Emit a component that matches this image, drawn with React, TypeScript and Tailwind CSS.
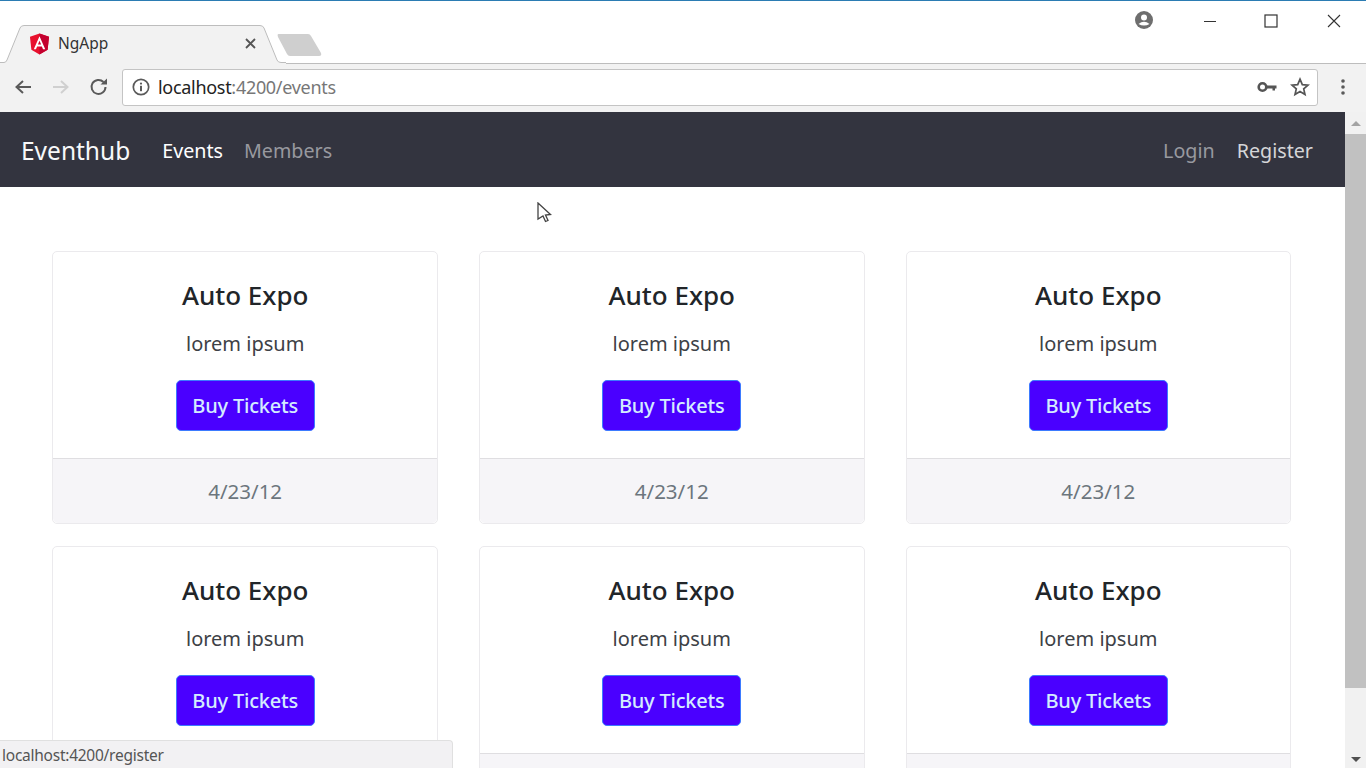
import React from 'react';

const uiFont = { fontFamily: '"Noto Sans", "Open Sans", sans-serif' };

const AngularLogo = () => (
  <svg width="21" height="22" viewBox="0 0 22 23">
    <path d="M11 0.5 L21 4 L19.5 17.5 L11 22.5 L2.5 17.5 L1 4 Z" fill="#e8112d" />
    <path d="M11 0.5 L21 4 L19.5 17.5 L11 22.5 Z" fill="#c3002f" />
    <path
      d="M11 3.5 L5 17 H7.3 L8.5 14 H13.5 L14.7 17 H17 Z M11 8 L12.7 12 H9.3 Z"
      fill="#fff"
      fillRule="evenodd"
    />
  </svg>
);

const TabShape = () => (
  <svg className="absolute left-0 top-0" width="286" height="39" viewBox="0 0 286 39">
    <path
      d="M0 37.5 H4 Q6 37.5 7 35 L20 3 Q21 0.5 24 0.5 H260 Q263 0.5 264 3 L277 35 Q278 37.5 281 37.5 H286 V39 H0 Z"
      fill="#f2f2f2"
    />
    <path
      d="M0 37.5 H4 Q6 37.5 7 35 L20 3 Q21 0.5 24 0.5 H260 Q263 0.5 264 3 L277 35 Q278 37.5 281 37.5 H286"
      fill="none"
      stroke="#bdbdbd"
      strokeWidth="1"
    />
  </svg>
);

const WindowControls = () => (
  <div className="flex items-center pr-[25px] text-[#333]">
    <svg width="20" height="20" viewBox="0 0 20 20" className="mr-[49px] mb-[2px]">
      <circle cx="10" cy="10" r="9" fill="#6e6e6e" />
      <circle cx="10" cy="7.5" r="3" fill="#fff" />
      <path d="M4.5 14 Q10 9.5 15.5 14 Q10 17 4.5 14 Z" fill="#fff" />
    </svg>
    <svg width="14" height="14" viewBox="0 0 14 14" className="mr-[47px]">
      <path d="M1 7.5 H13" stroke="#333" strokeWidth="1" />
    </svg>
    <svg width="14" height="14" viewBox="0 0 14 14" className="mr-[49px]">
      <rect x="1" y="1" width="12" height="12" fill="none" stroke="#333" strokeWidth="1.2" />
    </svg>
    <svg width="14" height="14" viewBox="0 0 14 14">
      <path d="M1 1 L13 13 M13 1 L1 13" stroke="#333" strokeWidth="1.1" />
    </svg>
  </div>
);

const TabStrip = () => (
  <div className="flex h-[62px] items-start justify-between bg-white">
    <div className="flex items-end pt-[24px]">
      <div className="relative h-[38px] w-[286px]">
        <TabShape />
        <div className="relative flex h-full items-center pb-[1px] pl-[29px] pr-[30px]">
          <AngularLogo />
          <span className="ml-[8px] flex-1 text-[15.5px] text-[#333]">NgApp</span>
          <svg width="11" height="11" viewBox="0 0 11 11">
            <path d="M1 1 L10 10 M10 1 L1 10" stroke="#555" strokeWidth="1.8" />
          </svg>
        </div>
      </div>
      <svg width="48" height="24" viewBox="0 0 48 24" className="mb-[6px] -ml-[9px]">
        <path d="M1.5 1 H31 Q33 1 34 3 L44 20 Q45 23 42 23 H13 Q11 23 10 21 L1 4 Q0 1 1.5 1 Z" fill="#cfcfcf" />
      </svg>
    </div>
    <div className="flex h-[38px] items-center pt-[1px]">
      <WindowControls />
    </div>
  </div>
);

const Toolbar = () => (
  <div className="flex h-[49px] items-center border-t border-[#bdbdbd] bg-[#f2f2f2] pb-[2px] pl-[14px] pr-[21px]">
    <svg width="18" height="18" viewBox="0 0 18 18" className="mr-[20px]">
      <path d="M17 9 H3 M9 3 L2.5 9 L9 15" fill="none" stroke="#5a5a5a" strokeWidth="2" />
    </svg>
    <svg width="18" height="18" viewBox="0 0 18 18" className="mr-[19px]">
      <path d="M1 9 H15 M9 3 L15.5 9 L9 15" fill="none" stroke="#d0d0d0" strokeWidth="2" />
    </svg>
    <svg width="20" height="20" viewBox="0 0 20 20" className="mr-[13px]">
      <path d="M16.5 10 A7 7 0 1 1 14.5 5" fill="none" stroke="#5a5a5a" strokeWidth="2" />
      <path d="M11.5 7.5 H18 V1.5 Z" fill="#5a5a5a" />
    </svg>
    <div className="flex h-[37px] flex-1 items-center rounded-[3px] border border-[#c4c4c4] bg-white pl-[9px] pr-[7px]">
      <svg width="18" height="18" viewBox="0 0 18 18" className="mr-[8px]">
        <circle cx="9" cy="9" r="7.7" fill="none" stroke="#5a5a5a" strokeWidth="1.7" />
        <circle cx="9" cy="5.6" r="1.1" fill="#5a5a5a" />
        <rect x="8" y="7.8" width="2" height="5.4" fill="#5a5a5a" />
      </svg>
      <span className="flex-1 text-[18px] tracking-[-0.3px]">
        <span className="text-[#222]">localhost</span>
        <span className="text-[#777]">:4200/events</span>
      </span>
      <svg width="20" height="12" viewBox="0 0 20 12" className="mr-[13px]">
        <circle cx="5.5" cy="6" r="3.8" fill="none" stroke="#555" strokeWidth="2.6" />
        <path d="M9 4.5 H19.5 V7.5 H18 V9.5 H15.5 V7.5 H9 Z" fill="#555" />
      </svg>
      <svg width="20" height="20" viewBox="0 0 20 20">
        <path
          d="M10 2.2 L12.3 7.6 L18 8.1 L13.7 11.9 L15 17.6 L10 14.6 L5 17.6 L6.3 11.9 L2 8.1 L7.7 7.6 Z"
          fill="none"
          stroke="#555"
          strokeWidth="1.7"
        />
      </svg>
    </div>
    <svg width="4" height="16" viewBox="0 0 4 16" className="ml-[23px]">
      <circle cx="2" cy="2" r="1.8" fill="#5a5a5a" />
      <circle cx="2" cy="8" r="1.8" fill="#5a5a5a" />
      <circle cx="2" cy="14" r="1.8" fill="#5a5a5a" />
    </svg>
  </div>
);

const Navbar = () => (
  <nav className="flex h-[75px] shrink-0 items-center justify-between bg-[#33343f] pl-[21px] pr-[32px] pt-[3px]">
    <div className="flex items-center">
      <a className="mr-[32px] text-[24.5px] text-[#f8f9fa]">Eventhub</a>
      <a className="mr-[21px] text-[19.7px] text-white">Events</a>
      <a className="text-[19.7px] text-[#98999f]">Members</a>
    </div>
    <div className="flex items-center">
      <a className="mr-[22px] text-[19.7px] text-[#98999f]">Login</a>
      <a className="text-[19.7px] text-[#d5d6d8]">Register</a>
    </div>
  </nav>
);

const EventCard = ({ date }: { date?: string }) => (
  <div className="flex h-[273px] flex-col rounded-[5px] border border-[#ebeaed] bg-white text-center">
    <div className="flex h-[206px] flex-col items-center pt-[23px]">
      <h5 className="h-[40px] text-[26px] font-medium leading-[40px] text-[#212529]">Auto Expo</h5>
      <p className="mt-[14px] h-[30px] text-[20px] leading-[30px] text-[#3d4146]">lorem ipsum</p>
      <button className="mt-[21px] h-[51px] w-[139px] rounded-[5px] border border-[#3d7bff] bg-[#4a00ff] text-[20px] font-medium tracking-[-0.2px] text-[#d4ecff]">
        Buy Tickets
      </button>
    </div>
    <div className="flex flex-1 items-center justify-center rounded-b-[5px] border-t border-[#dfdee1] bg-[#f6f5f8] pt-[1px] text-[20.5px] text-[#6c757d]">
      {date}
    </div>
  </div>
);

const Scrollbar = () => (
  <div className="flex w-[21px] shrink-0 flex-col items-center bg-[#f1f1f1]">
    <div className="flex h-[22px] w-full items-center justify-center">
      <div className="h-0 w-0 border-x-[5px] border-b-[5px] border-x-transparent border-b-[#a3a3a3]" />
    </div>
    <div className="h-[554px] w-full bg-[#c1c1c1]" />
    <div className="flex flex-1 items-end justify-center pb-[6px]">
      <div className="h-0 w-0 border-x-[5px] border-t-[5px] border-x-transparent border-t-[#505050]" />
    </div>
  </div>
);

export default function App() {
  return (
    <div className="relative flex h-[768px] w-[1366px] flex-col overflow-hidden bg-white" style={uiFont}>
      <div className="h-[1px] bg-[#2b7cb3]" />
      <TabStrip />
      <Toolbar />
      <div className="flex min-h-0 flex-1">
        <div className="flex min-w-0 flex-1 flex-col overflow-hidden">
          <Navbar />
          <div className="grid grid-cols-3 gap-x-[41px] gap-y-[22px] pl-[52.4px] pr-[53.9px] pt-[64px]">
            <EventCard date="4/23/12" />
            <EventCard date="4/23/12" />
            <EventCard date="4/23/12" />
            {/* footers of the second row are below the fold */}
            <EventCard />
            <EventCard />
            <EventCard />
          </div>
        </div>
        <Scrollbar />
      </div>

      {/* hover url bubble, sits over the cards */}
      <div className="absolute bottom-0 left-0 flex h-[28px] w-[453px] items-center rounded-tr-[4px] border-r border-t border-[#e0e0e0] bg-[#f2f1f3] pl-[2px] pt-[2px] text-[15.5px] tracking-[-0.25px] text-[#555]">
        localhost:4200/register
      </div>

      {/* mouse pointer */}
      <svg className="absolute left-[537px] top-[202px]" width="15" height="21" viewBox="0 0 15 21">
        <path
          d="M1 1 L13.5 12.5 L8.5 13 L11 18.5 L8.5 19.5 L6 14 L1 17 Z"
          fill="#fff"
          stroke="#444"
          strokeWidth="1.3"
        />
      </svg>
    </div>
  );
}
